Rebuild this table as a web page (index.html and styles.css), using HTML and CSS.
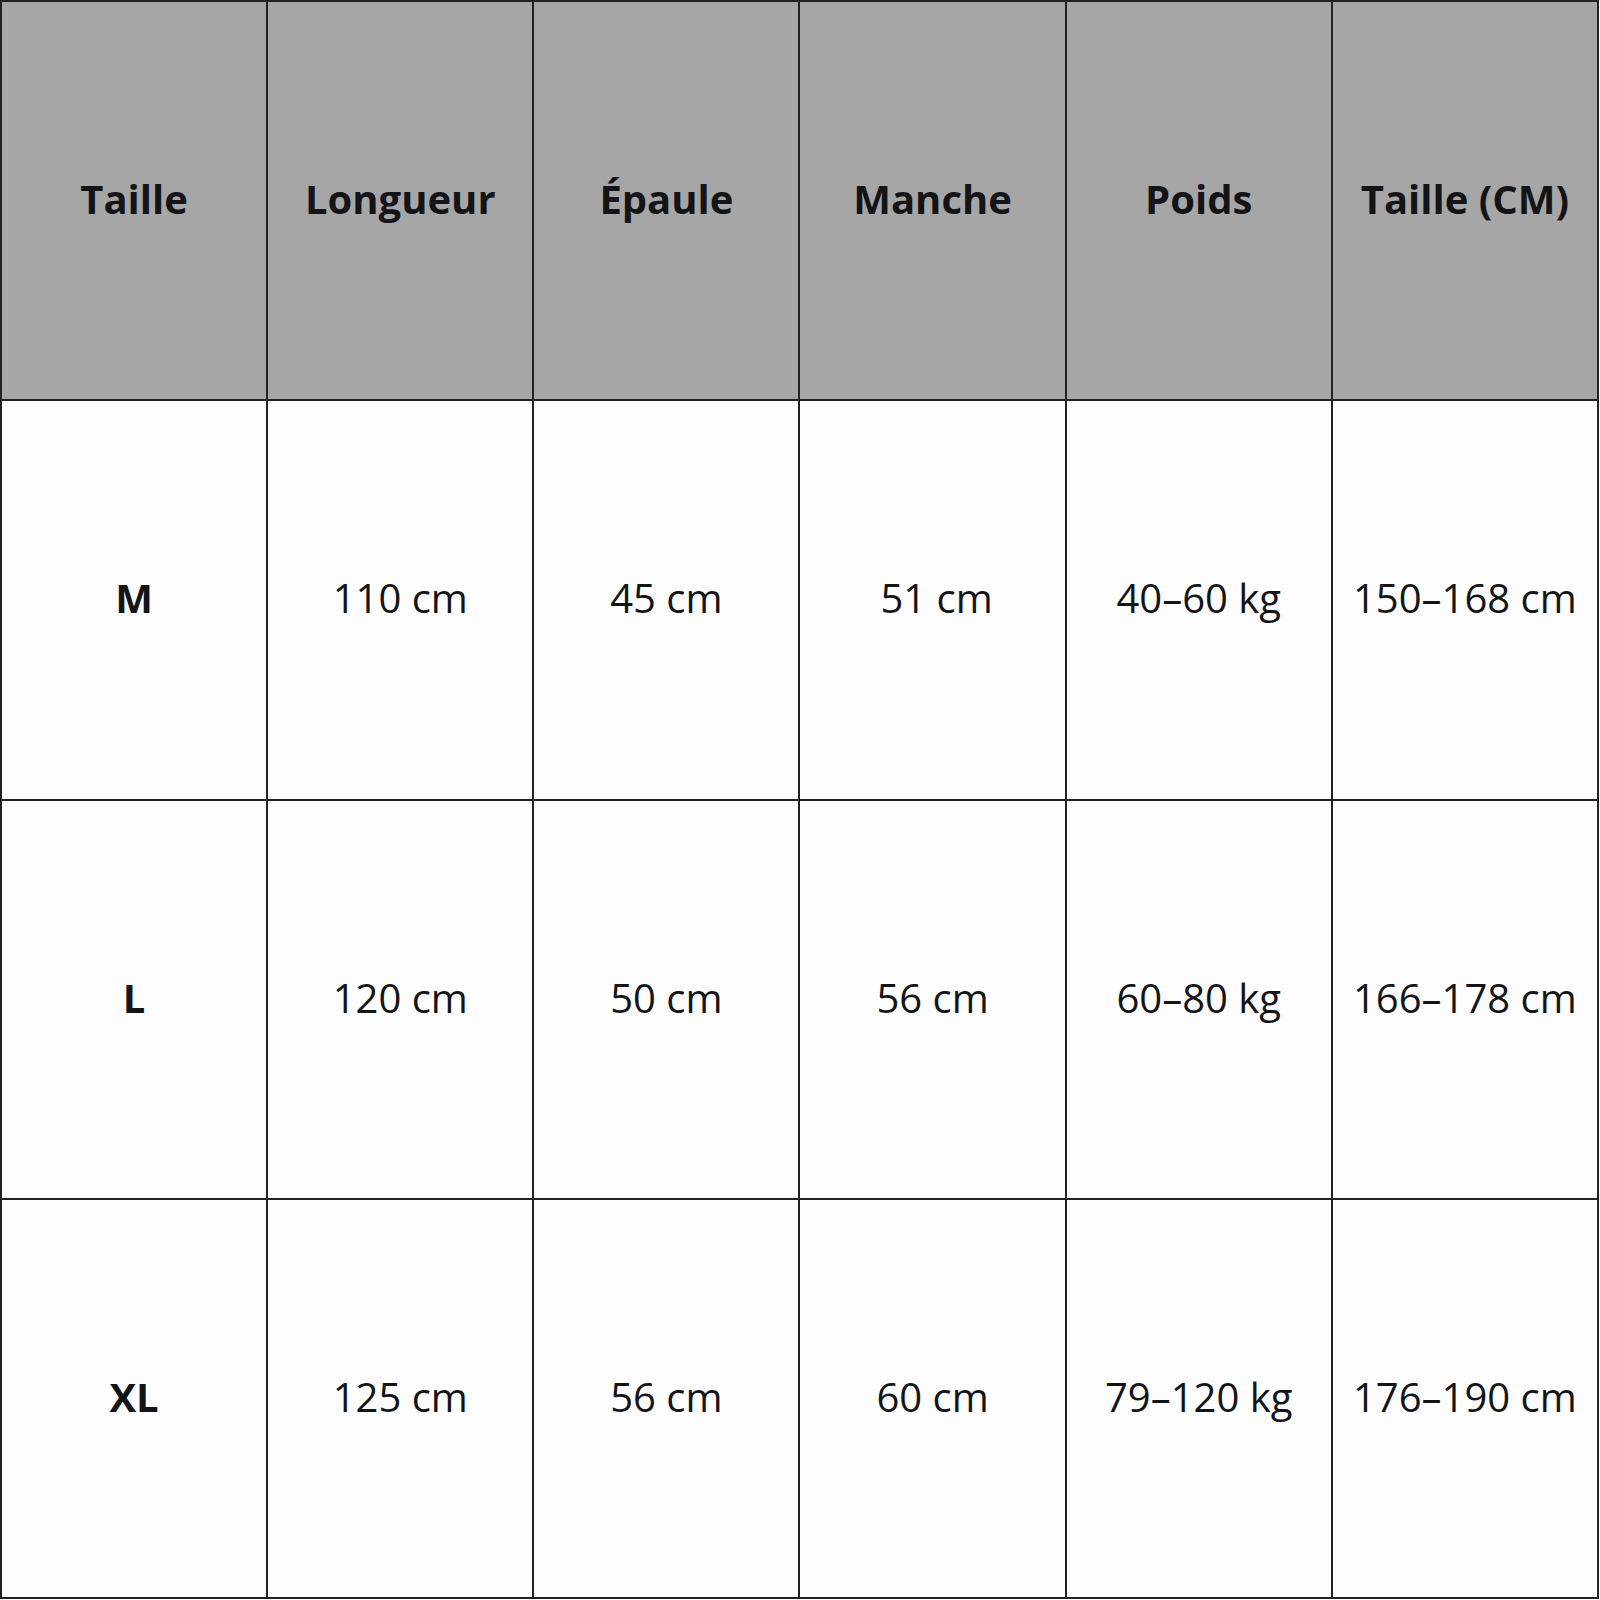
FILE: index.html
```html
<!DOCTYPE html>
<html lang="fr">
<head>
<meta charset="utf-8">
<title>Guide des tailles</title>
<link rel="stylesheet" href="styles.css">
</head>
<body>
<div class="chart">
  <div class="cell head">Taille</div>
  <div class="cell head">Longueur</div>
  <div class="cell head">Épaule</div>
  <div class="cell head">Manche</div>
  <div class="cell head">Poids</div>
  <div class="cell head">Taille (CM)</div>

  <div class="cell size">M</div>
  <div class="cell">110 cm</div>
  <div class="cell">45 cm</div>
  <div class="cell shift">51 cm</div>
  <div class="cell">40–60 kg</div>
  <div class="cell">150–168 cm</div>

  <div class="cell size">L</div>
  <div class="cell">120 cm</div>
  <div class="cell">50 cm</div>
  <div class="cell">56 cm</div>
  <div class="cell">60–80 kg</div>
  <div class="cell">166–178 cm</div>

  <div class="cell size">XL</div>
  <div class="cell">125 cm</div>
  <div class="cell">56 cm</div>
  <div class="cell">60 cm</div>
  <div class="cell">79–120 kg</div>
  <div class="cell">176–190 cm</div>
</div>
</body>
</html>
```
FILE: styles.css
```css
html, body {
  margin: 0;
  padding: 0;
  background: #ffffff;
}

.chart {
  box-sizing: border-box;
  width: 1599px;
  height: 1599px;
  display: grid;
  grid-template-columns: repeat(6, 1fr);
  grid-template-rows: repeat(4, 1fr);
  border-top: 2px solid #202226;
  border-left: 2px solid #202226;
  font-family: "Open Sans", "Noto Sans", sans-serif;
  color: #131418;
}

.cell {
  box-sizing: border-box;
  display: flex;
  align-items: center;
  justify-content: center;
  padding-bottom: 4px;
  border-right: 2px solid #202226;
  border-bottom: 2px solid #202226;
  background: #fdfdfd;
  font-size: 40px;
  font-weight: 400;
  white-space: nowrap;
}

.head {
  background: #a7a6a6;
  font-weight: 700;
}

.size {
  font-weight: 700;
}

.shift {
  padding-left: 8px;
}
```
